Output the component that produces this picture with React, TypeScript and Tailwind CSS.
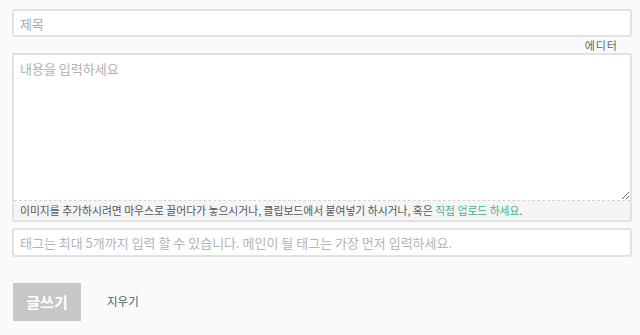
import React from "react";

export default function App() {
  const font = { fontFamily: '"Noto Sans CJK KR", "Noto Sans", sans-serif' };
  return (
    <div className="w-[640px] h-[335px] bg-[#fafafa] overflow-hidden" style={font}>
      <div className="ml-3 w-[620px] pt-[9px]">
        <input
          className="block w-full h-[28px] bg-white border-2 border-[#e2e2e2] rounded-[3px] px-[6px] text-[13px] text-[#555] placeholder:text-[#aaa] outline-none"
          placeholder="제목"
          style={font}
        />
        <div className="flex justify-end pr-[14px] h-[16px] items-center text-[11px] text-[#666] tracking-[1px]">
          에디터
        </div>
        <div className="border-2 border-[#e2e2e2] rounded-[2px] bg-[#f5f5f5]">
          <textarea
            className="block w-full h-[146px] bg-white px-[6px] py-[4px] text-[13px] text-[#555] placeholder:text-[#b0b0b0] outline-none border-b border-dashed border-[#d4d4d4] resize-y"
            placeholder="내용을 입력하세요"
            style={font}
          />
          <div className="h-[19px] flex items-center px-[6px] text-[10.8px] text-[#555]">
            <span>
              이미지를 추가하시려면 마우스로 끌어다가 놓으시거나, 클립보드에서 붙여넣기 하시거나, 혹은{" "}
              <span className="text-[#4cb08c]">직접 업로드 하세요</span>.
            </span>
          </div>
        </div>
        <input
          className="block mt-[6px] w-full h-[29px] bg-white border-2 border-[#e2e2e2] rounded-[3px] px-[6px] text-[13px] text-[#555] placeholder:text-[#b4b4b4] outline-none"
          placeholder="태그는 최대 5개까지 입력 할 수 있습니다. 메인이 될 태그는 가장 먼저 입력하세요."
          style={font}
        />
        <div className="mt-[26px] flex items-center">
          <button
            className="w-[68px] h-[38px] bg-[#c6c7c9] text-white text-[15px] font-bold ml-[1px]"
            style={font}
          >
            글쓰기
          </button>
          <span className="ml-[26px] text-[11.5px] text-[#555]">지우기</span>
        </div>
      </div>
    </div>
  );
}
